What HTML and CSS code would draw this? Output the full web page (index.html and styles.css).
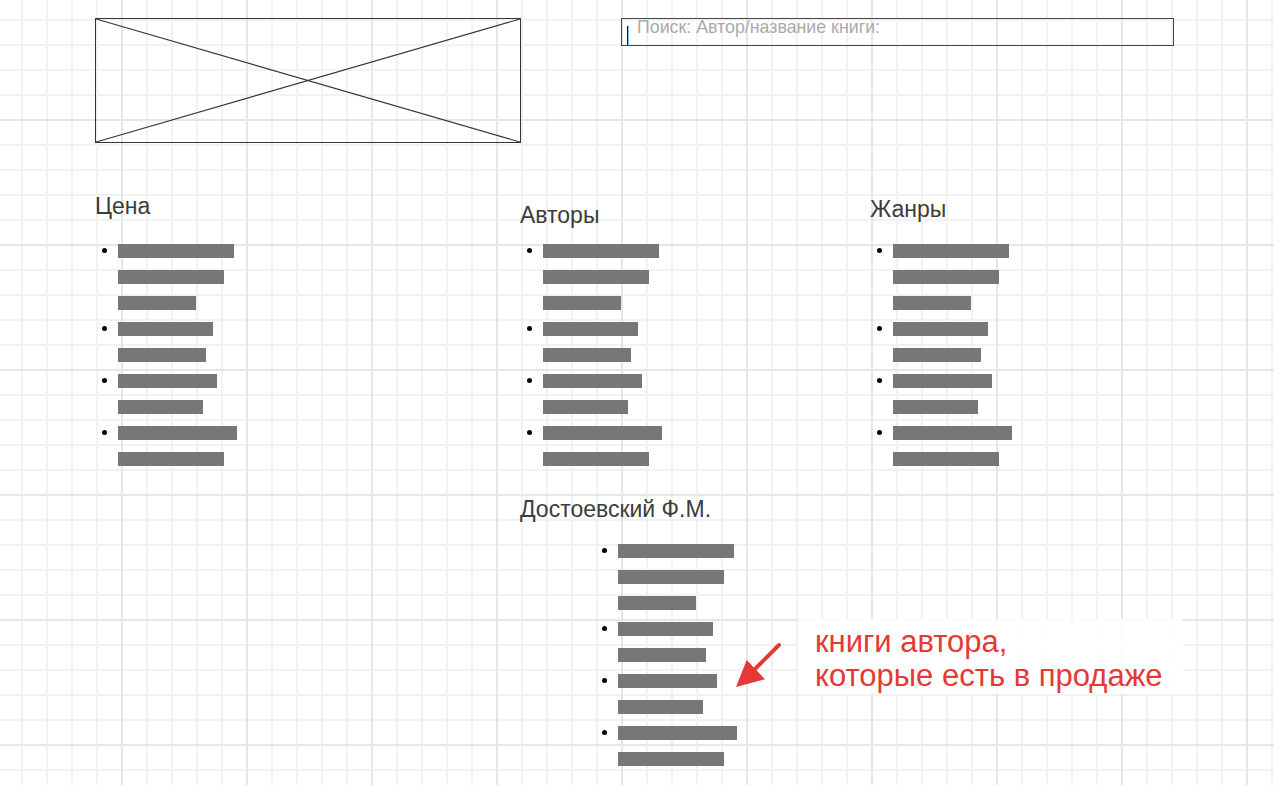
FILE: index.html
```html
<!DOCTYPE html>
<html lang="ru">
<head>
<meta charset="utf-8">
<title>Книги</title>
<link rel="stylesheet" href="styles.css">
</head>
<body>
<div class="page">
  <header class="top">
    <div class="logo">
      <svg class="logo-x" viewBox="0 0 424 123" preserveAspectRatio="none">
        <line x1="0" y1="0" x2="424" y2="123"/>
        <line x1="0" y1="123" x2="424" y2="0"/>
      </svg>
    </div>
    <div class="search"><span class="caret"></span><span class="placeholder">Поиск: Автор/название книги:</span></div>
  </header>

  <main class="filters">
    <section class="col col-price">
      <h2 class="col-title">Цена</h2>
      <ul class="bars">
        <li><span class="dot"></span><div class="stack"><span class="bar w116"></span><span class="bar w106"></span><span class="bar w78"></span></div></li>
        <li><span class="dot"></span><div class="stack"><span class="bar w95"></span><span class="bar w88"></span></div></li>
        <li><span class="dot"></span><div class="stack"><span class="bar w99"></span><span class="bar w85"></span></div></li>
        <li><span class="dot"></span><div class="stack"><span class="bar w119"></span><span class="bar w106"></span></div></li>
      </ul>
    </section>

    <section class="col col-authors">
      <h2 class="col-title">Авторы</h2>
      <ul class="bars">
        <li><span class="dot"></span><div class="stack"><span class="bar w116"></span><span class="bar w106"></span><span class="bar w78"></span></div></li>
        <li><span class="dot"></span><div class="stack"><span class="bar w95"></span><span class="bar w88"></span></div></li>
        <li><span class="dot"></span><div class="stack"><span class="bar w99"></span><span class="bar w85"></span></div></li>
        <li><span class="dot"></span><div class="stack"><span class="bar w119"></span><span class="bar w106"></span></div></li>
      </ul>

      <div class="author">
        <h2 class="col-title">Достоевский Ф.М.</h2>
        <ul class="bars bars-indent">
          <li><span class="dot"></span><div class="stack"><span class="bar w116"></span><span class="bar w106"></span><span class="bar w78"></span></div></li>
          <li><span class="dot"></span><div class="stack"><span class="bar w95"></span><span class="bar w88"></span></div></li>
          <li><span class="dot"></span><div class="stack"><span class="bar w99"></span><span class="bar w85"></span></div></li>
          <li><span class="dot"></span><div class="stack"><span class="bar w119"></span><span class="bar w106"></span></div></li>
        </ul>
      </div>
    </section>

    <section class="col col-genres">
      <h2 class="col-title">Жанры</h2>
      <ul class="bars">
        <li><span class="dot"></span><div class="stack"><span class="bar w116"></span><span class="bar w106"></span><span class="bar w78"></span></div></li>
        <li><span class="dot"></span><div class="stack"><span class="bar w95"></span><span class="bar w88"></span></div></li>
        <li><span class="dot"></span><div class="stack"><span class="bar w99"></span><span class="bar w85"></span></div></li>
        <li><span class="dot"></span><div class="stack"><span class="bar w119"></span><span class="bar w106"></span></div></li>
      </ul>
    </section>
  </main>

  <aside class="note">книги автора,<br>которые есть в продаже</aside>
  <svg class="arrow" viewBox="0 0 60 55">
    <line x1="49" y1="5" x2="22" y2="32"/>
    <polygon points="6,47 16.7,20 35,39.3"/>
  </svg>
</div>
</body>
</html>
```

FILE: styles.css
```css
html, body {
  margin: 0;
  padding: 0;
}

body {
  min-height: 785px;
  background-color: #ffffff;
  background-image:
    linear-gradient(to right, #e6e6e6 2px, transparent 2px),
    linear-gradient(to bottom, #e6e6e6 2px, transparent 2px),
    linear-gradient(to right, #f2f2f2 2px, transparent 2px),
    linear-gradient(to bottom, #f2f2f2 2px, transparent 2px);
  background-size: 125px 125px, 125px 125px, 25px 25px, 25px 25px;
  background-position: 121px 0, 0 119px, 21px 0, 0 19px;
  font-family: "Liberation Sans", Arial, sans-serif;
}

.page {
  position: relative;
  min-height: 785px;
}

.top {
  display: flex;
  align-items: flex-start;
  padding: 18px 0 0 95px;
}

.logo {
  box-sizing: border-box;
  width: 426px;
  height: 125px;
  border: 1px solid #333333;
}

.logo-x {
  display: block;
  width: 100%;
  height: 100%;
}

.logo-x line {
  stroke: #333333;
  stroke-width: 1.1;
}

.search {
  box-sizing: border-box;
  display: flex;
  width: 553px;
  height: 28px;
  margin-left: 100px;
  padding-left: 5px;
  border: 1px solid #444444;
}

.caret {
  flex: none;
  width: 2px;
  margin-top: 7px;
  background: linear-gradient(to right, #1a1a1a 1px, #7cc0f0 1px);
}

.placeholder {
  margin-left: 8px;
  font-size: 17.8px;
  line-height: 16px;
  color: #aaaaaa;
  white-space: nowrap;
}

.filters {
  display: flex;
  padding-left: 95px;
}

.col-price { width: 425px; }
.col-authors { width: 350px; }
.col-genres { flex: 1; }

.col-title {
  margin: 0;
  font-size: 23px;
  line-height: 28px;
  font-weight: normal;
  color: #3c3c3c;
  white-space: nowrap;
}

.col-price .col-title { margin-top: 49px; }
.col-authors > .col-title { margin-top: 58px; }
.col-genres .col-title { margin-top: 52px; }

.bars {
  list-style: none;
  margin: 0;
  padding: 0 0 0 7px;
}

.col-price > .bars { margin-top: 24px; }
.col-authors > .bars { margin-top: 15px; }
.col-genres > .bars { margin-top: 21px; }

.bars li {
  display: flex;
  gap: 11px;
}

.bars li + li {
  margin-top: 12px;
}

.dot {
  flex: none;
  width: 5px;
  height: 5px;
  margin-top: 4px;
  border-radius: 50%;
  background: #000000;
}

.stack {
  display: flex;
  flex-direction: column;
  gap: 12px;
}

.bar {
  display: block;
  height: 14px;
  background: #777777;
}

.w78 { width: 78px; }
.w85 { width: 85px; }
.w88 { width: 88px; }
.w95 { width: 95px; }
.w99 { width: 99px; }
.w106 { width: 106px; }
.w116 { width: 116px; }
.w119 { width: 119px; }

.author {
  margin-top: 29px;
}

.author .bars-indent {
  margin-top: 21px;
  padding-left: 82px;
}

.note {
  position: absolute;
  left: 798px;
  top: 619px;
  box-sizing: border-box;
  width: 385px;
  height: 75px;
  padding: 6px 0 0 17px;
  background: rgba(255, 255, 255, 0.88);
  color: #e53935;
  font-size: 31px;
  line-height: 34px;
  white-space: nowrap;
}

.arrow {
  position: absolute;
  left: 730px;
  top: 640px;
  width: 60px;
  height: 55px;
}

.arrow line {
  stroke: #e53935;
  stroke-width: 4;
  stroke-linecap: round;
}

.arrow polygon {
  fill: #e53935;
}
```
